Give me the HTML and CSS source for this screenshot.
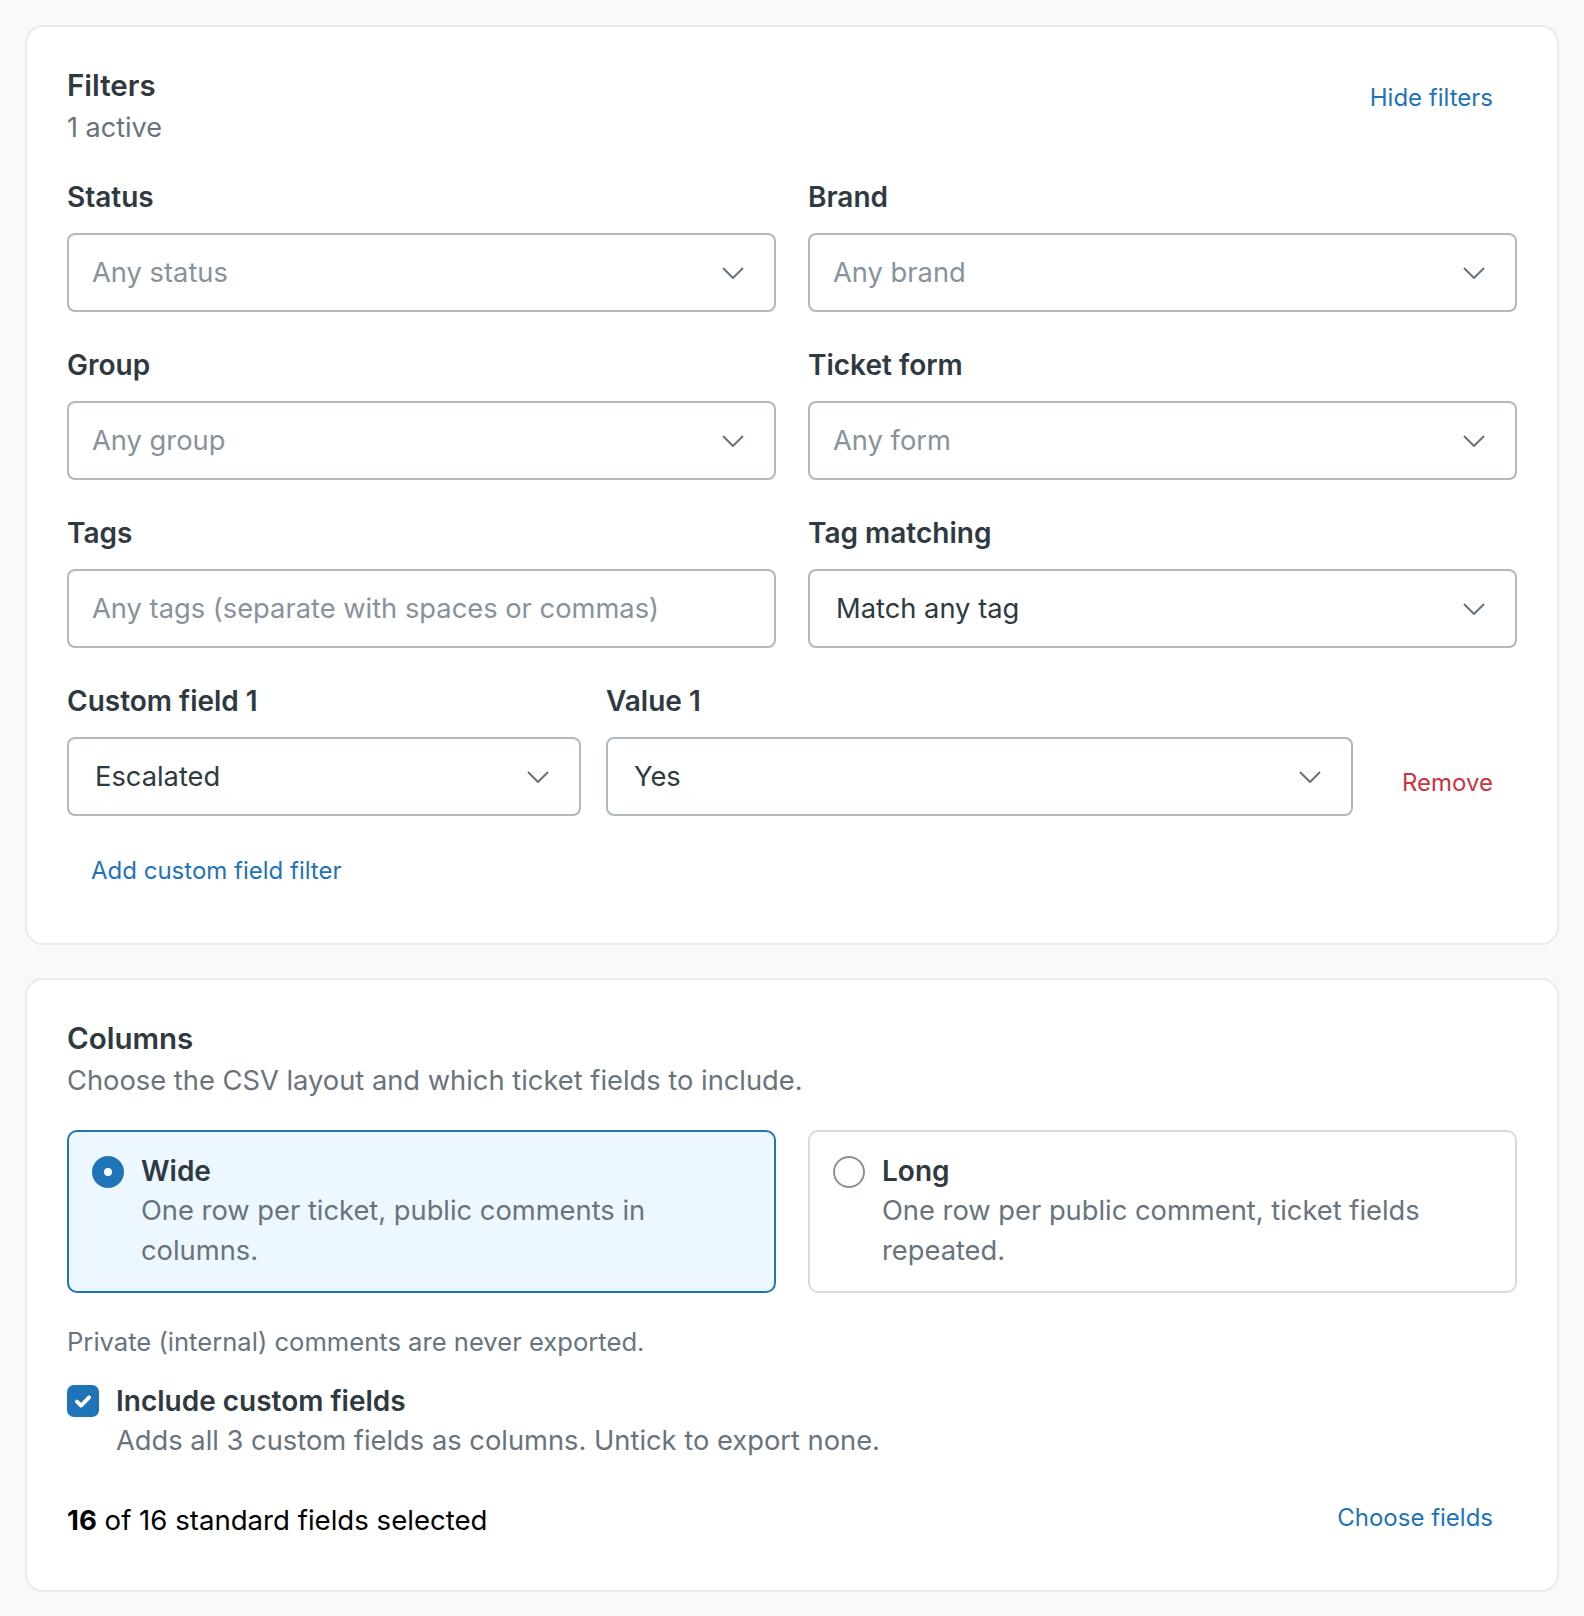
FILE: index.html
```html
<!DOCTYPE html>
<html lang="en">
<head>
  <meta charset="UTF-8">
  <meta name="viewport" content="width=device-width, initial-scale=1.0">
  <link rel="stylesheet" href="styles.css">
  <title>Export tickets</title>
</head>
<body>
  <main class="page">
    <section class="card">
      <header class="card-head">
        <div>
          <h2 class="card-title">Filters</h2>
          <p class="card-sub">1 active</p>
        </div>
        <button type="button" class="link">Hide filters</button>
      </header>

      <div class="filter-grid">
        <div class="field">
          <label class="field-label">Status</label>
          <button type="button" class="select is-empty">
            <span>Any status</span>
            <svg class="chevron" viewBox="0 0 22 12"><path d="M1 1l10 10L21 1"/></svg>
          </button>
        </div>
        <div class="field">
          <label class="field-label">Brand</label>
          <button type="button" class="select is-empty">
            <span>Any brand</span>
            <svg class="chevron" viewBox="0 0 22 12"><path d="M1 1l10 10L21 1"/></svg>
          </button>
        </div>
        <div class="field">
          <label class="field-label">Group</label>
          <button type="button" class="select is-empty">
            <span>Any group</span>
            <svg class="chevron" viewBox="0 0 22 12"><path d="M1 1l10 10L21 1"/></svg>
          </button>
        </div>
        <div class="field">
          <label class="field-label">Ticket form</label>
          <button type="button" class="select is-empty">
            <span>Any form</span>
            <svg class="chevron" viewBox="0 0 22 12"><path d="M1 1l10 10L21 1"/></svg>
          </button>
        </div>
        <div class="field">
          <label class="field-label" for="tags">Tags</label>
          <input type="text" id="tags" class="text-input" placeholder="Any tags (separate with spaces or commas)">
        </div>
        <div class="field">
          <label class="field-label">Tag matching</label>
          <button type="button" class="select">
            <span>Match any tag</span>
            <svg class="chevron" viewBox="0 0 22 12"><path d="M1 1l10 10L21 1"/></svg>
          </button>
        </div>
      </div>

      <div class="custom-row">
        <div class="field">
          <label class="field-label">Custom field 1</label>
          <button type="button" class="select">
            <span>Escalated</span>
            <svg class="chevron" viewBox="0 0 22 12"><path d="M1 1l10 10L21 1"/></svg>
          </button>
        </div>
        <div class="field">
          <label class="field-label">Value 1</label>
          <button type="button" class="select">
            <span>Yes</span>
            <svg class="chevron" viewBox="0 0 22 12"><path d="M1 1l10 10L21 1"/></svg>
          </button>
        </div>
        <button type="button" class="link link-danger">Remove</button>
      </div>

      <button type="button" class="link link-add">Add custom field filter</button>
    </section>

    <section class="card">
      <h2 class="card-title">Columns</h2>
      <p class="card-desc">Choose the CSV layout and which ticket fields to include.</p>

      <div class="layout-options">
        <label class="option is-selected">
          <span class="radio"></span>
          <span class="option-body">
            <span class="option-title">Wide</span>
            <span class="option-hint">One row per ticket, public comments in columns.</span>
          </span>
        </label>
        <label class="option">
          <span class="radio"></span>
          <span class="option-body">
            <span class="option-title">Long</span>
            <span class="option-hint">One row per public comment, ticket fields repeated.</span>
          </span>
        </label>
      </div>

      <p class="note">Private (internal) comments are never exported.</p>

      <label class="check">
        <span class="checkbox">
          <svg viewBox="0 0 16 16"><path d="M3.6 8.4l3 2.9 5.8-6"/></svg>
        </span>
        <span class="option-body">
          <span class="option-title">Include custom fields</span>
          <span class="option-hint">Adds all 3 custom fields as columns. Untick to export none.</span>
        </span>
      </label>

      <div class="fields-row">
        <p class="fields-count"><strong>16</strong> of 16 standard fields selected</p>
        <button type="button" class="link">Choose fields</button>
      </div>
    </section>
  </main>
</body>
</html>
```

FILE: styles.css
```css
* {
  margin: 0;
  padding: 0;
  box-sizing: border-box;
}

body {
  background-color: #f8f9f9;
  font-family: Inter, "Noto Sans", sans-serif;
  color: #2f3941;
}

.page {
  padding: 25px;
}

.card {
  background-color: #fff;
  border: 2px solid #e9ebed;
  border-radius: 18px;
  padding: 39px 40px 42px;
}

.card + .card {
  margin-top: 33px;
}

.card-head {
  display: flex;
  justify-content: space-between;
  align-items: flex-start;
  margin-bottom: 31px;
}

.card-title {
  font-size: 29.5px;
  line-height: 38px;
  font-weight: 600;
}

.card-sub {
  margin-top: 6px;
  font-size: 27px;
  line-height: 36px;
  color: #68737d;
}

.link {
  font-family: inherit;
  font-size: 24px;
  line-height: 36px;
  padding: 12px 24px;
  border: 0;
  border-radius: 8px;
  background: none;
  color: #1f73b7;
  cursor: pointer;
}

.card-head .link {
  padding-top: 14px;
}

.link-danger {
  color: #cc3340;
  align-self: end;
  margin-bottom: 3px;
}

.link-add {
  margin-top: 25px;
}

.filter-grid {
  display: grid;
  grid-template-columns: 1fr 1fr;
  column-gap: 32px;
  row-gap: 33px;
}

.field {
  display: flex;
  flex-direction: column;
  min-width: 0;
}

.field-label {
  font-size: 28px;
  line-height: 40px;
  font-weight: 600;
  margin-bottom: 16px;
}

.select,
.text-input {
  height: 79px;
  width: 100%;
  border: 2px solid #b0b8be;
  border-radius: 8px;
  background-color: #fff;
  font-family: inherit;
  font-size: 27.3px;
  color: #2f3941;
  text-align: left;
}

.select {
  display: flex;
  align-items: center;
  justify-content: space-between;
  padding: 0 30px 0 26px;
  cursor: pointer;
}

.select.is-empty {
  color: #87929d;
  padding-left: 23px;
}

.text-input {
  padding: 0 23px;
  outline: none;
}

.text-input::placeholder {
  color: #87929d;
}

.chevron {
  width: 22px;
  height: 12px;
  fill: none;
  stroke: #68737d;
  stroke-width: 2;
}

.custom-row {
  display: grid;
  grid-template-columns: 514px 1fr auto;
  column-gap: 25px;
  margin-top: 33px;
}

.card-desc {
  margin-top: 4px;
  font-size: 27.3px;
  line-height: 40px;
  color: #68737d;
}

.layout-options {
  display: grid;
  grid-template-columns: 1fr 1fr;
  gap: 32px;
  margin-top: 29px;
}

.option {
  display: flex;
  align-items: flex-start;
  gap: 17px;
  min-height: 163px;
  padding: 19px 24px 19px 23px;
  border: 2px solid #d8dcde;
  border-radius: 10px;
  cursor: pointer;
}

.option.is-selected {
  background-color: #edf7ff;
  border-color: #1f73b7;
}

.radio {
  flex: none;
  width: 32px;
  height: 32px;
  margin-top: 5px;
  border: 2px solid #87929d;
  border-radius: 50%;
  background-color: #fff;
}

.is-selected .radio {
  border: 12px solid #1f73b7;
}

.option-body {
  display: flex;
  flex-direction: column;
}

.option-title {
  font-size: 28px;
  line-height: 40px;
  font-weight: 600;
}

.option-hint {
  font-size: 27.3px;
  line-height: 40px;
  color: #68737d;
}

.note {
  margin-top: 31px;
  font-size: 25.6px;
  line-height: 36px;
  color: #68737d;
}

.check {
  display: flex;
  align-items: flex-start;
  gap: 17px;
  margin-top: 21px;
  cursor: pointer;
}

.checkbox {
  flex: none;
  width: 32px;
  height: 32px;
  margin-top: 4px;
  border-radius: 7px;
  background-color: #1f73b7;
  display: flex;
  align-items: center;
  justify-content: center;
}

.checkbox svg {
  width: 22px;
  height: 22px;
  fill: none;
  stroke: #fff;
  stroke-width: 2.8;
  stroke-linecap: round;
  stroke-linejoin: round;
}

.fields-row {
  display: flex;
  justify-content: space-between;
  align-items: center;
  margin-top: 27px;
}

.fields-count {
  padding-top: 4px;
  font-size: 27.6px;
  line-height: 40px;
  color: #000;
}

.fields-count strong {
  font-weight: 700;
}
```
